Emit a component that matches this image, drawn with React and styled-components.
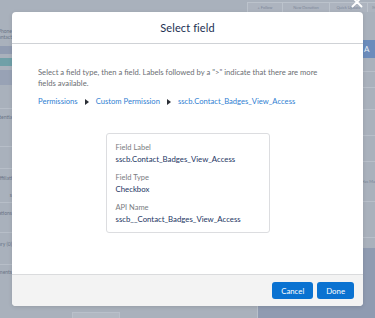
import React from 'react';
import styled, { createGlobalStyle } from 'styled-components';

const GlobalStyle = createGlobalStyle`
  html, body {
    margin: 0;
    padding: 0;
    background: #a9b1bc;
  }
  * {
    box-sizing: border-box;
  }
`;

const Page = styled.div`
  position: relative;
  width: 375px;
  height: 318px;
  overflow: hidden;
  background: #a9b1bc;
  font-family: "Lato", "Liberation Sans", Arial, sans-serif;
  display: grid;
  grid-template-rows: 12px 1fr;
`;

const TopBar = styled.div`
  display: flex;
  justify-content: flex-end;
  align-items: flex-end;
  margin-right: -12px;
`;

const GhostButton = styled.div`
  height: 10px;
  width: ${(p) => p.w}px;
  border: 1px solid #bcc3cc;
  border-bottom: none;
  margin-left: -1px;
  background: #adb4bf;
  color: #7c879a;
  font-size: 4px;
  display: flex;
  justify-content: center;
  align-items: center;
  white-space: nowrap;
  overflow: hidden;
`;

const Content = styled.div`
  display: grid;
  grid-template-columns: 12px 246px 1fr;
`;

const SideNav = styled.div`
  display: flex;
  flex-direction: column;
  overflow: hidden;
  padding-top: 16px;
`;

const NavBand = styled.div`
  height: ${(p) => p.h}px;
  margin-top: ${(p) => p.mt || 0}px;
  background: ${(p) => p.bg || 'transparent'};
  border-bottom: ${(p) => (p.line ? '1px solid #b7bec8' : 'none')};
  display: flex;
  justify-content: flex-end;
  align-items: center;
  color: #6b7587;
  font-size: 5px;
  white-space: nowrap;
  overflow: hidden;
`;

const Main = styled.div`
  border-right: 1px solid #b9c0ca;
  display: flex;
  flex-direction: column;
  justify-content: flex-end;
  align-items: flex-start;
`;

const BottomCard = styled.div`
  margin-left: 60px;
  width: 48px;
  height: 6px;
  background: #b1b8c2;
  border: 1px solid #b9c0ca;
  border-bottom: none;
`;

const RightPanel = styled.div`
  display: flex;
  flex-direction: column;
  padding-left: 4px;
`;

const RightTop = styled.div`
  padding-top: 28px;
  display: flex;
  justify-content: flex-end;
`;

const BlueAction = styled.div`
  width: 14px;
  height: 18px;
  background: #6b8cbc;
  border-radius: 2px 0 0 2px;
  color: #e6ecf5;
  font-size: 8px;
  display: flex;
  align-items: center;
  padding-left: 3px;
`;

const RightRows = styled.div`
  flex: 1;
  display: flex;
  flex-direction: column;
`;

const RightRow = styled.div`
  height: ${(p) => p.h}px;
  border-bottom: 1px solid #b8bfc9;
  color: #7a8496;
  font-size: 4px;
  display: flex;
  align-items: center;
  justify-content: flex-end;
  white-space: nowrap;
  overflow: hidden;
`;

const DarkPanel = styled.div`
  height: 70px;
  margin-left: -4px;
  background: #8f9bb1;
`;

const CloseButton = styled.svg`
  position: absolute;
  top: -4px;
  right: 12px;
`;

const Modal = styled.div`
  position: absolute;
  top: 12px;
  left: 12px;
  width: 351px;
  height: 294px;
  background: #ffffff;
  border-radius: 4px;
  box-shadow: 0 1px 4px rgba(0, 0, 0, 0.12);
  display: flex;
  flex-direction: column;
  overflow: hidden;
`;

const ModalHeader = styled.div`
  height: 32px;
  border-bottom: 1px solid #cfd2d6;
  display: flex;
  justify-content: center;
  align-items: center;
`;

const Title = styled.h2`
  margin: 0;
  font-size: 11px;
  font-weight: 400;
  color: #1b2f52;
  letter-spacing: 0.1px;
`;

const ModalBody = styled.div`
  flex: 1;
  padding: 23px 26px 0;
`;

const Intro = styled.p`
  margin: 0;
  font-size: 7.65px;
  line-height: 11px;
  color: #6b6e73;
`;

const Breadcrumb = styled.div`
  margin-top: 7px;
  display: flex;
  align-items: center;
  gap: 6px;
  font-size: 7.65px;
  line-height: 11px;
`;

const Crumb = styled.span`
  color: #2f80d2;
`;

const Arrow = styled.svg`
  flex: none;
  margin: 0 1px;
`;

const FieldCard = styled.div`
  margin: 26px auto 0;
  width: 164px;
  border: 1px solid #dcdde0;
  border-radius: 3px;
  padding: 8px 9px 7px;
`;

const FieldGroup = styled.div`
  & + & {
    margin-top: 7px;
  }
`;

const FieldLabel = styled.div`
  font-size: 7.5px;
  line-height: 11px;
  color: #797c81;
`;

const FieldValue = styled.div`
  font-size: 7.8px;
  line-height: 12px;
  color: #1c3563;
`;

const ModalFooter = styled.div`
  height: 32px;
  border-top: 1px solid #dadbdd;
  background: #f3f3f3;
  display: flex;
  justify-content: flex-end;
  align-items: center;
  gap: 4px;
  padding-right: 9px;
`;

const BrandButton = styled.button`
  height: 17px;
  padding: 0 9px;
  border: none;
  border-radius: 3px;
  background: #0a72d1;
  color: #ffffff;
  font-family: inherit;
  font-size: 7.8px;
  cursor: pointer;
`;

const fields = [
  { label: 'Field Label', value: 'sscb.Contact_Badges_View_Access' },
  { label: 'Field Type', value: 'Checkbox' },
  { label: 'API Name', value: 'sscb__Contact_Badges_View_Access' },
];

const crumbs = ['Permissions', 'Custom Permission', 'sscb.Contact_Badges_View_Access'];

const TriangleIcon = () => (
  <Arrow width="4" height="6" viewBox="0 0 4 6">
    <path d="M0 0 L4 3 L0 6 Z" fill="#2b2f36" />
  </Arrow>
);

const App = () => {
  return (
    <Page>
      <GlobalStyle />
      <TopBar>
        <GhostButton w={36}>+ Follow</GhostButton>
        <GhostButton w={48}>New Donation</GhostButton>
        <GhostButton w={39}>Quick Update</GhostButton>
        <GhostButton w={20}>More</GhostButton>
      </TopBar>

      <Content>
        <SideNav>
          <NavBand h={6}>Phone</NavBand>
          <NavBand h={6}>Contact</NavBand>
          <NavBand h={8} mt={6} bg="#919cb1" />
          <NavBand h={8} mt={4} bg="#70a0a8" />
          <NavBand h={15} mt={4} bg="#98a2b5" />
          <NavBand h={18} mt={6} line />
          <NavBand h={16}>Potentia</NavBand>
          <NavBand h={22} line />
          <NavBand h={22} line />
          <NavBand h={18}>Affiliati</NavBand>
          <NavBand h={16} line>s</NavBand>
          <NavBand h={20}>Relations</NavBand>
          <NavBand h={10} line />
          <NavBand h={22}>History (0)</NavBand>
          <NavBand h={10} line />
          <NavBand h={14}>Documents</NavBand>
        </SideNav>

        <Main>
          <BottomCard />
        </Main>

        <RightPanel>
          <RightTop>
            <BlueAction>A</BlueAction>
          </RightTop>
          <RightRows>
            <RightRow h={14} />
            <RightRow h={16} />
            <RightRow h={22} />
            <RightRow h={26} />
            <RightRow h={26} />
            <RightRow h={40}>Has Ma</RightRow>
            <RightRow h={36} />
          </RightRows>
          <DarkPanel />
        </RightPanel>
      </Content>

      <Modal>
        <ModalHeader>
          <Title>Select field</Title>
        </ModalHeader>
        <ModalBody>
          <Intro>
            Select a field type, then a field. Labels followed by a "&gt;" indicate that there are more
            fields available.
          </Intro>
          <Breadcrumb>
            {crumbs.map((c, i) => (
              <React.Fragment key={c}>
                {i > 0 && <TriangleIcon />}
                <Crumb>{c}</Crumb>
              </React.Fragment>
            ))}
          </Breadcrumb>
          <FieldCard>
            {fields.map((f) => (
              <FieldGroup key={f.label}>
                <FieldLabel>{f.label}</FieldLabel>
                <FieldValue>{f.value}</FieldValue>
              </FieldGroup>
            ))}
          </FieldCard>
        </ModalBody>
        <ModalFooter>
          <BrandButton>Cancel</BrandButton>
          <BrandButton>Done</BrandButton>
        </ModalFooter>
      </Modal>

      <CloseButton width="12" height="12" viewBox="0 0 12 12">
        <path d="M1.5 1.5 L10.5 10.5 M10.5 1.5 L1.5 10.5" stroke="#ffffff" strokeWidth="1.8" strokeLinecap="round" />
      </CloseButton>
    </Page>
  );
};

export default App;
